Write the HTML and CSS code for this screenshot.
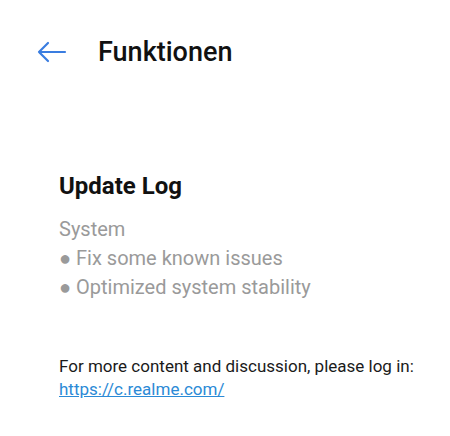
FILE: index.html
```html
<!DOCTYPE html>
<html>
<head>
<meta charset="utf-8">
<link rel="stylesheet" href="styles.css">
</head>
<body>
<div class="page">
  <header class="bar">
    <svg class="back" width="30" height="22" viewBox="0 0 30 22" aria-hidden="true">
      <path d="M28 11 H2 M11 2 L2 11 L11 20" fill="none" stroke="#3a7de0" stroke-width="2.2" stroke-linecap="round" stroke-linejoin="round"/>
    </svg>
    <h1 class="title">Funktionen</h1>
  </header>
  <main class="content">
    <h2 class="log-title">Update Log</h2>
    <div class="log">
      <div>System</div>
      <div>● Fix some known issues</div>
      <div>● Optimized system stability</div>
    </div>
    <p class="more">For more content and discussion, please log in:<br><a href="#">https://c.realme.com/</a></p>
  </main>
</div>
</body>
</html>
```
FILE: styles.css
```css
html, body { margin: 0; padding: 0; background: #fff; }
body { font-family: Roboto, "Noto Sans", sans-serif; width: 450px; height: 436px; overflow: hidden; }
.page { display: flex; flex-direction: column; }
.bar { display: flex; align-items: center; height: 52px; padding: 26px 0 0 37px; }
.back { flex: none; }
.title { margin: 0 0 0 31px; font-size: 27px; font-weight: 500; color: #111; }
.content { padding: 94px 0 0 59px; }
.log-title { margin: 0; font-size: 24px; font-weight: 700; color: #111; line-height: 28px; }
.log { margin-top: 15px; font-size: 20px; line-height: 29px; color: #9a9a9a; }
.more { margin: 53px 0 0; font-size: 17px; line-height: 23px; color: #1a1a1a; }
.more a { color: #2b8ad6; text-decoration: underline; }
```
